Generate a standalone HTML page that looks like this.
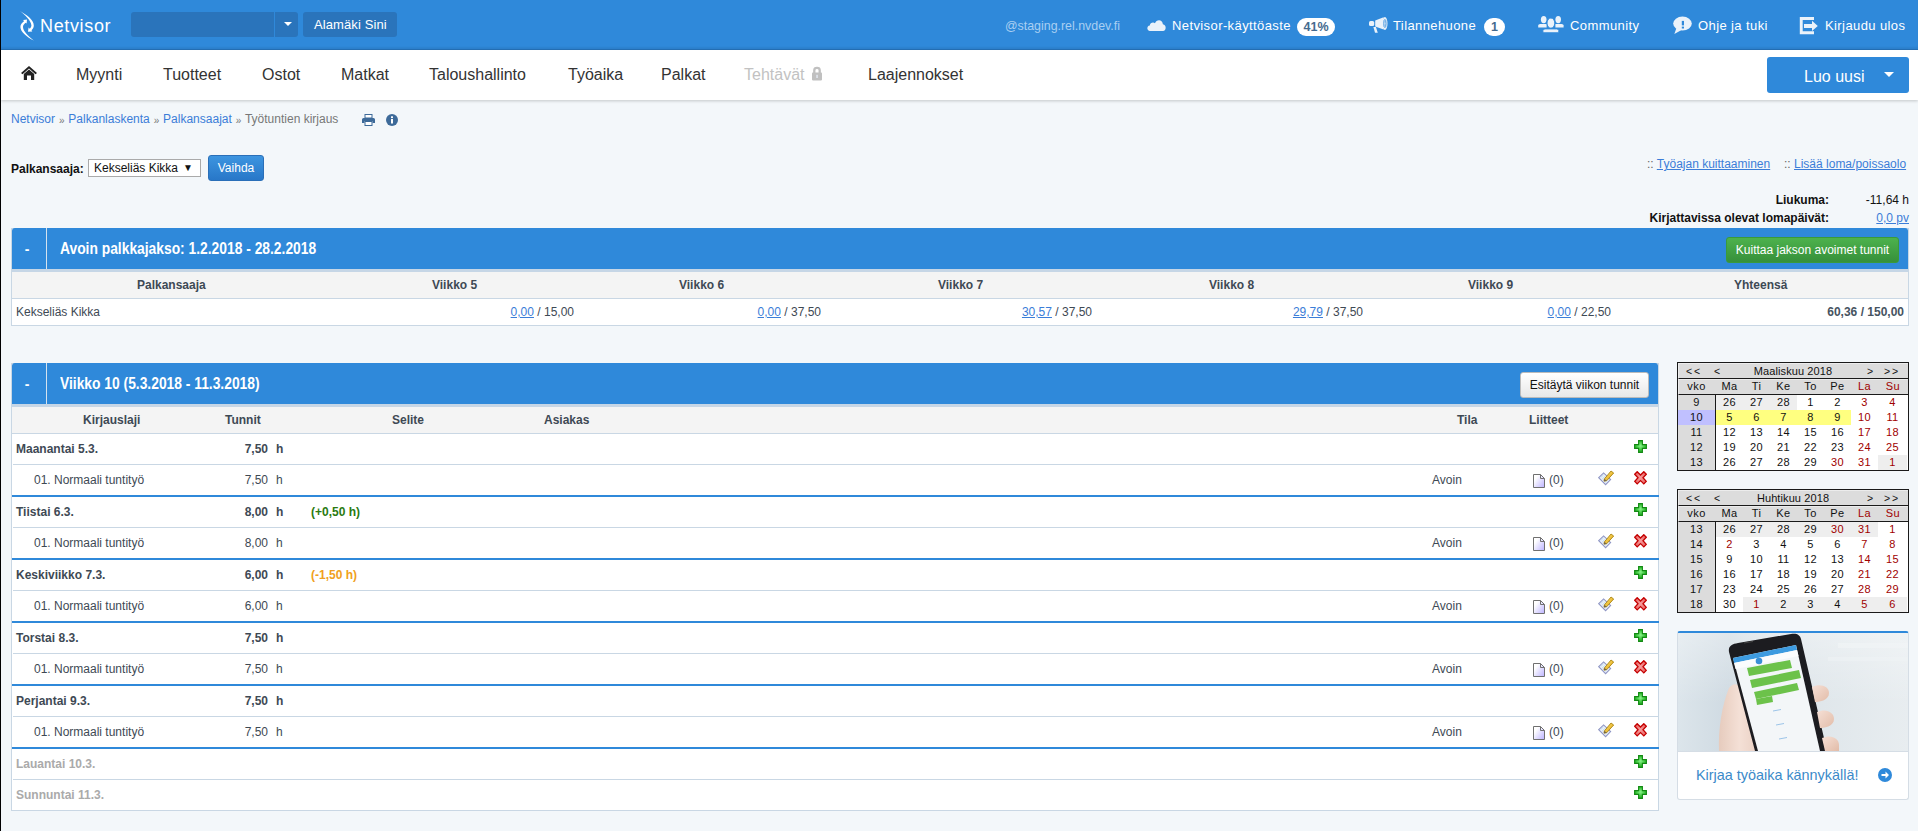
<!DOCTYPE html>
<html><head><meta charset="utf-8">
<style>
*{box-sizing:border-box;margin:0;padding:0}
html,body{width:1918px;height:831px;overflow:hidden}
body{font-family:"Liberation Sans",sans-serif;background:#f3f7fa;position:relative;color:#333}
.a{position:absolute;white-space:nowrap}
#lb{position:absolute;left:0;top:0;width:1px;height:831px;background:#000;z-index:50}
#top{position:absolute;left:0;top:0;width:1918px;height:50px;background:#2f89da;border-bottom:1px solid #2672b8;box-shadow:inset 0 -2px 2px rgba(0,0,0,.06)}
#top .t{position:absolute;color:#fff;font-size:13px;letter-spacing:0.4px;white-space:nowrap;top:18px;line-height:16px}
.badge{position:absolute;background:#fff;color:#456a8e;font-weight:bold;font-size:12.5px;text-align:center;border-radius:9px;height:18px;line-height:18px;top:18px}
#nav{position:absolute;left:1px;top:50px;width:1917px;height:50px;background:#fff;box-shadow:0 1px 3px rgba(0,0,0,.2)}
#nav .n{position:absolute;top:16px;font-size:16px;line-height:18px;color:#333;white-space:nowrap}
.lnk{color:#3b7dd8}
.ul{text-decoration:underline}
.panel{position:absolute;background:#fff;border:1px solid #c9d7e4}
.ph{position:absolute;left:0;top:-1px;right:0;height:41px;background:#2f89da;border-radius:3px 3px 0 0}
.ph .dash{position:absolute;left:0;top:0;width:35px;height:41px;border-right:1px solid #d5e3ef;color:#fff;font-weight:bold;font-size:14px;text-align:center;line-height:42px;padding-right:4px}
.ph .tt{position:absolute;left:48px;top:12px;color:#fff;font-weight:bold;font-size:16px;line-height:18px;white-space:nowrap;transform:scaleX(0.864);transform-origin:0 0}
.strip{position:absolute;left:0;right:0;top:40px;height:3px;background:#c6d6e6}
.th{position:absolute;left:0;right:0;top:43px;height:27px;background:#f4f4f4;border-bottom:1px solid #c9d7e4}
.th div,.row div{position:absolute;white-space:nowrap;font-size:12px;line-height:14px}
.th div{font-weight:bold;color:#3e4954;top:6px}
.row{position:absolute;left:0;right:0;background:#fff;border-bottom:1px solid #c9d7e4}
.row div{color:#3e4954}
.row.b{border-bottom:2px solid #2f89da}
.bold{font-weight:bold}
.rq{font-size:10px;display:inline-block;width:6.67px;text-align:center;position:relative;top:1px}
.cal{position:absolute;border:1px solid #222;background:#fff;font-size:11px;color:#111;letter-spacing:.3px}
.cal table{border-collapse:collapse;width:100%;table-layout:fixed}
.cal td{text-align:center;height:15px;line-height:15px;padding:0}
</style></head><body>
<div id="lb"></div>
<svg width="0" height="0" style="position:absolute">
<defs>
<radialGradient id="gp" cx="0.5" cy="0.45" r="0.6"><stop offset="0" stop-color="#8af58a"/><stop offset="0.6" stop-color="#3cc43c"/><stop offset="1" stop-color="#1c9a1c"/></radialGradient>
<radialGradient id="gx" cx="0.5" cy="0.5" r="0.6"><stop offset="0" stop-color="#f8a0a0"/><stop offset="1" stop-color="#e86060"/></radialGradient>
<linearGradient id="gdoc" x1="0.2" y1="0.3" x2="0.9" y2="0.9"><stop offset="0" stop-color="#ffffff"/><stop offset="1" stop-color="#c4bcff"/></linearGradient>
<linearGradient id="gpen" x1="0" y1="0" x2="1" y2="1"><stop offset="0" stop-color="#ffe680"/><stop offset="1" stop-color="#e0a000"/></linearGradient>
</defs></svg>

<div id="top">
  <svg class="a" style="left:14px;top:6px" width="30" height="38" viewBox="0 0 30 38">
    <path d="M6 5 C12 8.5 19.8 13.5 19.8 19.5 C19.8 21.5 18.8 23 17.5 24.2 L18.3 25.6 L14 25.8 L14.6 21.6 L15.7 22.7 C16.9 21.6 17.4 20.5 17.4 19.5 C17.2 14.5 11 9 6 5 Z" fill="#fff"/>
    <path d="M19.8 34.6 C13 31 6.4 26 6.4 21 C6.4 18.6 8 16.6 10 15.2 L9.2 13.9 L13 13.6 L12.6 17.6 L11.6 16.8 C10 18 9 19.5 9 21 C9 25 14 30 19.8 34.6 Z" fill="#fff"/>
  </svg>
  <div class="t" style="left:40px;top:14.5px;font-size:18px;line-height:22px;letter-spacing:0.65px">Netvisor</div>
  <div class="a" style="left:131px;top:12px;width:143px;height:25px;background:#2a74bb;border-radius:3px 0 0 3px"></div>
  <div class="a" style="left:275px;top:12px;width:23px;height:25px;background:#2a74bb;border-radius:0 3px 3px 0"></div>
  <div class="a" style="left:283.5px;top:22px;width:0;height:0;border-left:4px solid transparent;border-right:4px solid transparent;border-top:4.5px solid #fff"></div>
  <div class="a" style="left:303px;top:12px;width:94px;height:25px;background:#2a74bb;border-radius:3px"></div>
  <div class="t" style="left:314px;top:17px;font-size:13px;letter-spacing:0.1px">Alamäki Sini</div>
  <div class="t" style="left:1005px;color:#a9cff2;font-size:12.4px;letter-spacing:0">@staging.rel.nvdev.fi</div>
  <svg class="a" style="left:1146px;top:19px" width="21" height="13" viewBox="0 0 21 13"><path d="M4 12 C0.6 12 0.4 7 3.8 6.6 C4 3.8 7 2.8 9 4.2 C10.2 0.4 16.4 0 16.9 5.2 C20.6 5.5 20.6 12 17 12 Z" fill="#eaf2fa"/></svg>
  <div class="t" style="left:1172px">Netvisor-käyttöaste</div>
  <div class="badge" style="left:1297px;width:38px">41%</div>
  <svg class="a" style="left:1366px;top:14px" width="24" height="22" viewBox="0 0 24 22"><rect x="3" y="7" width="5.2" height="5" rx="1.6" fill="#eaf2fa"/><path d="M9.2 6.5 L17.6 3.2 L17.6 15.6 L9.2 12.6 Z" fill="#eaf2fa"/><ellipse cx="18.9" cy="9.5" rx="2.6" ry="6.5" fill="#eaf2fa"/><ellipse cx="18.9" cy="9.5" rx="1.1" ry="4" fill="none" stroke="#2f89da" stroke-width="0.9"/><path d="M7.4 13 L9.9 13 L11.8 18.7 L9 18.7 Z" fill="#eaf2fa"/></svg>
  <div class="t" style="left:1393px">Tilannehuone</div>
  <div class="badge" style="left:1484px;width:21px">1</div>
  <svg class="a" style="left:1536px;top:14px" width="30" height="20" viewBox="0 0 30 20"><ellipse cx="7.7" cy="5.6" rx="2.8" ry="3.7" fill="#eaf2fa"/><path d="M2.2 13.6 V11.6 Q2.2 10 4.2 10 H10.6 V13.6 Z" fill="#eaf2fa"/><ellipse cx="22.2" cy="5.6" rx="2.8" ry="3.7" fill="#eaf2fa"/><path d="M19.4 10 H25.6 Q27.6 10 27.6 11.6 V13.6 H19.4 Z" fill="#eaf2fa"/><ellipse cx="14.9" cy="9.1" rx="3.9" ry="5.1" fill="#eaf2fa" stroke="#2f89da" stroke-width="1"/><path d="M6.9 18.8 V16.6 Q6.9 14.9 9 14.9 H20.8 Q22.8 14.9 22.8 16.6 V18.8 Z" fill="#eaf2fa" stroke="#2f89da" stroke-width="1"/></svg>
  <div class="t" style="left:1570px">Community</div>
  <svg class="a" style="left:1672px;top:15px" width="21" height="21" viewBox="0 0 21 21"><ellipse cx="10.5" cy="8.6" rx="9.3" ry="7" fill="#eaf2fa"/><path d="M4.5 13 L2.3 19 L10.5 14.5 Z" fill="#eaf2fa"/><rect x="9.8" y="5.9" width="2.2" height="4.5" fill="#2f89da"/><rect x="9.8" y="11.6" width="2.2" height="1.9" fill="#2f89da"/></svg>
  <div class="t" style="left:1698px">Ohje ja tuki</div>
  <svg class="a" style="left:1798px;top:15px" width="22" height="21" viewBox="0 0 22 21"><path d="M1.8 2 H16 V4.9 H4.7 V16.3 H16 V19.2 H1.8 Z" fill="#eaf2fa"/><path d="M6 9 H14 V5.7 L19.8 11 L14 16 V13 H6 Z" fill="#eaf2fa"/></svg>
  <div class="t" style="left:1825px">Kirjaudu ulos</div>
</div>
<div id="nav">
  <svg class="a" style="left:20px;top:16px" width="16" height="14" viewBox="0 0 16 14"><path d="M8 0 L16 7 L14.5 8.3 L8 2.6 L1.5 8.3 L0 7 Z" fill="#222"/><path d="M2.8 8 L8 3.6 L13.2 8 L13.2 14 L10 14 L10 9.5 L6 9.5 L6 14 L2.8 14 Z" fill="#222"/></svg>
  <div class="n" style="left:75px">Myynti</div>
  <div class="n" style="left:162px">Tuotteet</div>
  <div class="n" style="left:261px">Ostot</div>
  <div class="n" style="left:340px">Matkat</div>
  <div class="n" style="left:428px">Taloushallinto</div>
  <div class="n" style="left:567px">Työaika</div>
  <div class="n" style="left:660px">Palkat</div>
  <div class="n" style="left:743px;color:#c2c2c2">Tehtävät</div>
  <svg class="a" style="left:810px;top:16px" width="12" height="15" viewBox="0 0 12 15"><path d="M3.3 7 V4.2 C3.3 1.2 8.7 1.2 8.7 4.2 V7" stroke="#c0c0c0" stroke-width="2.3" fill="none"/><rect x="1" y="6.6" width="10" height="7.8" rx="0.8" fill="#c0c0c0"/><rect x="5.4" y="8.8" width="1.3" height="3.2" fill="#e8eef8"/></svg>
  <div class="n" style="left:867px">Laajennokset</div>
  <div class="a" style="left:1766px;top:7px;width:142px;height:36px;background:#2f89da;border-radius:3px"></div>
  <div class="n" style="left:1803px;top:18px;color:#fff">Luo uusi</div>
  <div class="a" style="left:1883px;top:22px;width:0;height:0;border-left:5px solid transparent;border-right:5px solid transparent;border-top:5px solid #fff"></div>
</div>

<!-- breadcrumb -->
<div class="a" style="left:11px;top:112px;font-size:12px;line-height:14px;color:#777"><span class="lnk">Netvisor</span> <span class="rq">»</span> <span class="lnk">Palkanlaskenta</span> <span class="rq">»</span> <span class="lnk">Palkansaajat</span> <span class="rq">»</span> Työtuntien kirjaus</div>
<svg class="a" style="left:362px;top:114px" width="13" height="12" viewBox="0 0 13 12"><rect x="3" y="0.5" width="7" height="3.5" fill="#fff" stroke="#3d6a99" stroke-width="1"/><path d="M1.5 4 H11.5 Q13 4 13 5.5 V9 H10.5 V7 H2.5 V9 H0 V5.5 Q0 4 1.5 4 Z" fill="#3d6a99"/><rect x="3" y="7.5" width="7" height="4" fill="#fff" stroke="#3d6a99" stroke-width="1"/></svg>
<svg class="a" style="left:386px;top:114px" width="12" height="12" viewBox="0 0 12 12"><circle cx="6" cy="6" r="6" fill="#3d6a99"/><rect x="5" y="5" width="2" height="4.5" fill="#fff"/><rect x="5" y="2.3" width="2" height="1.8" fill="#fff"/></svg>

<div class="a bold" style="left:11px;top:162px;font-size:12px;line-height:14px;color:#111">Palkansaaja:</div>
<div class="a" style="left:88px;top:159px;width:113px;height:18px;background:#fff;border:1px solid #aaa;font-size:12px;line-height:16px;padding-left:5px;color:#111">Kekseliäs Kikka<span style="position:absolute;left:94px;font-size:10px">▼</span></div>
<div class="a" style="left:208px;top:155px;width:56px;height:26px;background:linear-gradient(#3d95e0,#2877c8);border:1px solid #2a6fb8;border-radius:3px;color:#fff;font-size:12px;line-height:24px;text-align:center">Vaihda</div>

<div class="a" style="left:1647px;top:157px;font-size:12px;line-height:14px;color:#666">:: <span class="lnk ul">Työajan kuittaaminen</span></div>
<div class="a" style="left:1784px;top:157px;font-size:12px;line-height:14px;color:#666">:: <span class="lnk ul">Lisää loma/poissaolo</span></div>
<div class="a bold" style="right:89px;top:193px;font-size:12px;line-height:14px;color:#111">Liukuma:</div>
<div class="a" style="right:9px;top:193px;font-size:12px;line-height:14px;color:#111">-11,64 h</div>
<div class="a bold" style="right:89px;top:211px;font-size:12px;line-height:14px;color:#111">Kirjattavissa olevat lomapäivät:</div>
<div class="a lnk ul" style="right:9px;top:211px;font-size:12px;line-height:14px">0,0 pv</div>

<!-- panel 1 -->
<div class="panel" style="left:11px;top:228px;width:1898px;height:98px">
  <div class="ph"><div class="dash">-</div><div class="tt">Avoin palkkajakso: 1.2.2018 - 28.2.2018</div>
    <div class="a" style="right:9px;top:9px;width:173px;height:26px;background:linear-gradient(#4db24d,#36903a);border:1px solid #3a9a3a;border-radius:3px;color:#fff;font-size:12px;line-height:24px;text-align:center">Kuittaa jakson avoimet tunnit</div>
  </div>
  <div class="strip"></div>
  <div class="th">
    <div style="left:125px">Palkansaaja</div>
    <div style="left:420px">Viikko 5</div>
    <div style="left:667px">Viikko 6</div>
    <div style="left:926px">Viikko 7</div>
    <div style="left:1197px">Viikko 8</div>
    <div style="left:1456px">Viikko 9</div>
    <div style="left:1722px">Yhteensä</div>
  </div>
  <div class="row" style="top:70px;height:26px;border-bottom:none">
    <div style="left:4px;top:6px">Kekseliäs Kikka</div>
    <div style="right:1334px;top:6px"><span class="lnk ul">0,00</span> / 15,00</div>
    <div style="right:1087px;top:6px"><span class="lnk ul">0,00</span> / 37,50</div>
    <div style="right:816px;top:6px"><span class="lnk ul">30,57</span> / 37,50</div>
    <div style="right:545px;top:6px"><span class="lnk ul">29,79</span> / 37,50</div>
    <div style="right:297px;top:6px"><span class="lnk ul">0,00</span> / 22,50</div>
    <div style="right:4px;top:6px;color:#46535f" class="bold">60,36 / 150,00</div>
  </div>
</div>

<!-- panel 2 -->
<div class="panel" id="p2" style="left:11px;top:363px;width:1648px;height:448px">
  <div class="ph"><div class="dash">-</div><div class="tt">Viikko 10 (5.3.2018 - 11.3.2018)</div>
    <div class="a" style="right:9px;top:9px;width:129px;height:26px;background:linear-gradient(#fff,#e8e8e8);border:1px solid #bbb;border-radius:3px;color:#111;font-size:12px;line-height:25px;text-align:center">Esitäytä viikon tunnit</div>
  </div>
  <div class="strip"></div>
  <div class="th">
    <div style="left:71px">Kirjauslaji</div>
    <div style="left:213px">Tunnit</div>
    <div style="left:380px">Selite</div>
    <div style="left:532px">Asiakas</div>
    <div style="left:1445px">Tila</div>
    <div style="left:1517px">Liitteet</div>
  </div>
</div>
<div class="a bold" style="left:16px;top:442px;font-size:12px;line-height:14px;color:#3e4954">Maanantai 5.3.</div>
<div class="a bold" style="left:228px;width:40px;text-align:right;top:442px;font-size:12px;line-height:14px;color:#3e4954">7,50</div>
<div class="a bold" style="left:276px;top:442px;font-size:12px;line-height:14px;color:#3e4954">h</div>
<svg class="a" style="left:1634px;top:440px" width="13" height="13" viewBox="0 0 13 13"><path d="M4.6 0.6 H8.4 V4.6 H12.4 V8.4 H8.4 V12.4 H4.6 V8.4 H0.6 V4.6 H4.6 Z" fill="url(#gp)" stroke="#138a13" stroke-width="1.1" stroke-linejoin="miter"/></svg>
<div class="a" style="left:13px;top:464px;width:1645px;height:1px;background:#c9d7e4"></div>
<div class="a" style="left:34px;top:473px;font-size:12px;line-height:14px;color:#3e4954">01. Normaali tuntityö</div>
<div class="a" style="left:228px;width:40px;text-align:right;top:473px;font-size:12px;line-height:14px;color:#3e4954">7,50</div>
<div class="a" style="left:276px;top:473px;font-size:12px;line-height:14px;color:#3e4954">h</div>
<div class="a" style="left:1432px;top:473px;font-size:12px;line-height:14px;color:#3e4954">Avoin</div>
<svg class="a" style="left:1533px;top:474px" width="12" height="14" viewBox="0 0 12 14"><path d="M0.5 0.5 H7.5 L11.5 4.5 V13.5 H0.5 Z" fill="url(#gdoc)" stroke="#707070" stroke-width="1" stroke-linejoin="miter"/><path d="M7.5 0.5 V4.5 H11.5" fill="none" stroke="#707070" stroke-width="1"/></svg>
<div class="a" style="left:1549px;top:473px;font-size:12px;line-height:14px;color:#3e4954">(0)</div>
<svg class="a" style="left:1598px;top:469px" width="16" height="17" viewBox="0 0 16 17"><path d="M0.7 8.6 L5.6 3.9 L12.6 10.6 L7.6 15.6 Z" fill="#eef2fc" stroke="#8f96c4" stroke-width="1.1"/><path d="M2.6 8.7 L5.7 5.8 M4.1 10.2 L7.2 7.3 M5.6 11.7 L8.7 8.8 M7.1 13.2 L10.2 10.3" stroke="#a8d0e0" stroke-width="0.7"/><path d="M6.3 10 L13 2 L15.7 4 L8.8 11.6 L6 12.2 Z" fill="url(#gpen)" stroke="#a07800" stroke-width="0.8"/><path d="M6 12.2 L6.3 10 L8.8 11.6 Z" fill="#6a6050"/></svg>
<svg class="a" style="left:1634px;top:471px" width="13" height="14" viewBox="0 0 13 14"><path d="M0.7 3.2 L3.2 0.7 L6.5 4 L9.8 0.7 L12.3 3.2 L9 6.8 L12.3 10.4 L9.8 12.9 L6.5 9.6 L3.2 12.9 L0.7 10.4 L4 6.8 Z" fill="url(#gx)" stroke="#c40000" stroke-width="1.3" stroke-linejoin="miter"/></svg>
<div class="a" style="left:12px;top:495px;width:1647px;height:2px;background:#2f89da"></div>
<div class="a bold" style="left:16px;top:505px;font-size:12px;line-height:14px;color:#3e4954">Tiistai 6.3.</div>
<div class="a bold" style="left:228px;width:40px;text-align:right;top:505px;font-size:12px;line-height:14px;color:#3e4954">8,00</div>
<div class="a bold" style="left:276px;top:505px;font-size:12px;line-height:14px;color:#3e4954">h</div>
<div class="a bold" style="left:311px;top:505px;font-size:12px;line-height:14px;color:#2a7a10">(+0,50 h)</div>
<svg class="a" style="left:1634px;top:503px" width="13" height="13" viewBox="0 0 13 13"><path d="M4.6 0.6 H8.4 V4.6 H12.4 V8.4 H8.4 V12.4 H4.6 V8.4 H0.6 V4.6 H4.6 Z" fill="url(#gp)" stroke="#138a13" stroke-width="1.1" stroke-linejoin="miter"/></svg>
<div class="a" style="left:13px;top:527px;width:1645px;height:1px;background:#c9d7e4"></div>
<div class="a" style="left:34px;top:536px;font-size:12px;line-height:14px;color:#3e4954">01. Normaali tuntityö</div>
<div class="a" style="left:228px;width:40px;text-align:right;top:536px;font-size:12px;line-height:14px;color:#3e4954">8,00</div>
<div class="a" style="left:276px;top:536px;font-size:12px;line-height:14px;color:#3e4954">h</div>
<div class="a" style="left:1432px;top:536px;font-size:12px;line-height:14px;color:#3e4954">Avoin</div>
<svg class="a" style="left:1533px;top:537px" width="12" height="14" viewBox="0 0 12 14"><path d="M0.5 0.5 H7.5 L11.5 4.5 V13.5 H0.5 Z" fill="url(#gdoc)" stroke="#707070" stroke-width="1" stroke-linejoin="miter"/><path d="M7.5 0.5 V4.5 H11.5" fill="none" stroke="#707070" stroke-width="1"/></svg>
<div class="a" style="left:1549px;top:536px;font-size:12px;line-height:14px;color:#3e4954">(0)</div>
<svg class="a" style="left:1598px;top:532px" width="16" height="17" viewBox="0 0 16 17"><path d="M0.7 8.6 L5.6 3.9 L12.6 10.6 L7.6 15.6 Z" fill="#eef2fc" stroke="#8f96c4" stroke-width="1.1"/><path d="M2.6 8.7 L5.7 5.8 M4.1 10.2 L7.2 7.3 M5.6 11.7 L8.7 8.8 M7.1 13.2 L10.2 10.3" stroke="#a8d0e0" stroke-width="0.7"/><path d="M6.3 10 L13 2 L15.7 4 L8.8 11.6 L6 12.2 Z" fill="url(#gpen)" stroke="#a07800" stroke-width="0.8"/><path d="M6 12.2 L6.3 10 L8.8 11.6 Z" fill="#6a6050"/></svg>
<svg class="a" style="left:1634px;top:534px" width="13" height="14" viewBox="0 0 13 14"><path d="M0.7 3.2 L3.2 0.7 L6.5 4 L9.8 0.7 L12.3 3.2 L9 6.8 L12.3 10.4 L9.8 12.9 L6.5 9.6 L3.2 12.9 L0.7 10.4 L4 6.8 Z" fill="url(#gx)" stroke="#c40000" stroke-width="1.3" stroke-linejoin="miter"/></svg>
<div class="a" style="left:12px;top:558px;width:1647px;height:2px;background:#2f89da"></div>
<div class="a bold" style="left:16px;top:568px;font-size:12px;line-height:14px;color:#3e4954">Keskiviikko 7.3.</div>
<div class="a bold" style="left:228px;width:40px;text-align:right;top:568px;font-size:12px;line-height:14px;color:#3e4954">6,00</div>
<div class="a bold" style="left:276px;top:568px;font-size:12px;line-height:14px;color:#3e4954">h</div>
<div class="a bold" style="left:311px;top:568px;font-size:12px;line-height:14px;color:#f0a020">(-1,50 h)</div>
<svg class="a" style="left:1634px;top:566px" width="13" height="13" viewBox="0 0 13 13"><path d="M4.6 0.6 H8.4 V4.6 H12.4 V8.4 H8.4 V12.4 H4.6 V8.4 H0.6 V4.6 H4.6 Z" fill="url(#gp)" stroke="#138a13" stroke-width="1.1" stroke-linejoin="miter"/></svg>
<div class="a" style="left:13px;top:590px;width:1645px;height:1px;background:#c9d7e4"></div>
<div class="a" style="left:34px;top:599px;font-size:12px;line-height:14px;color:#3e4954">01. Normaali tuntityö</div>
<div class="a" style="left:228px;width:40px;text-align:right;top:599px;font-size:12px;line-height:14px;color:#3e4954">6,00</div>
<div class="a" style="left:276px;top:599px;font-size:12px;line-height:14px;color:#3e4954">h</div>
<div class="a" style="left:1432px;top:599px;font-size:12px;line-height:14px;color:#3e4954">Avoin</div>
<svg class="a" style="left:1533px;top:600px" width="12" height="14" viewBox="0 0 12 14"><path d="M0.5 0.5 H7.5 L11.5 4.5 V13.5 H0.5 Z" fill="url(#gdoc)" stroke="#707070" stroke-width="1" stroke-linejoin="miter"/><path d="M7.5 0.5 V4.5 H11.5" fill="none" stroke="#707070" stroke-width="1"/></svg>
<div class="a" style="left:1549px;top:599px;font-size:12px;line-height:14px;color:#3e4954">(0)</div>
<svg class="a" style="left:1598px;top:595px" width="16" height="17" viewBox="0 0 16 17"><path d="M0.7 8.6 L5.6 3.9 L12.6 10.6 L7.6 15.6 Z" fill="#eef2fc" stroke="#8f96c4" stroke-width="1.1"/><path d="M2.6 8.7 L5.7 5.8 M4.1 10.2 L7.2 7.3 M5.6 11.7 L8.7 8.8 M7.1 13.2 L10.2 10.3" stroke="#a8d0e0" stroke-width="0.7"/><path d="M6.3 10 L13 2 L15.7 4 L8.8 11.6 L6 12.2 Z" fill="url(#gpen)" stroke="#a07800" stroke-width="0.8"/><path d="M6 12.2 L6.3 10 L8.8 11.6 Z" fill="#6a6050"/></svg>
<svg class="a" style="left:1634px;top:597px" width="13" height="14" viewBox="0 0 13 14"><path d="M0.7 3.2 L3.2 0.7 L6.5 4 L9.8 0.7 L12.3 3.2 L9 6.8 L12.3 10.4 L9.8 12.9 L6.5 9.6 L3.2 12.9 L0.7 10.4 L4 6.8 Z" fill="url(#gx)" stroke="#c40000" stroke-width="1.3" stroke-linejoin="miter"/></svg>
<div class="a" style="left:12px;top:621px;width:1647px;height:2px;background:#2f89da"></div>
<div class="a bold" style="left:16px;top:631px;font-size:12px;line-height:14px;color:#3e4954">Torstai 8.3.</div>
<div class="a bold" style="left:228px;width:40px;text-align:right;top:631px;font-size:12px;line-height:14px;color:#3e4954">7,50</div>
<div class="a bold" style="left:276px;top:631px;font-size:12px;line-height:14px;color:#3e4954">h</div>
<svg class="a" style="left:1634px;top:629px" width="13" height="13" viewBox="0 0 13 13"><path d="M4.6 0.6 H8.4 V4.6 H12.4 V8.4 H8.4 V12.4 H4.6 V8.4 H0.6 V4.6 H4.6 Z" fill="url(#gp)" stroke="#138a13" stroke-width="1.1" stroke-linejoin="miter"/></svg>
<div class="a" style="left:13px;top:653px;width:1645px;height:1px;background:#c9d7e4"></div>
<div class="a" style="left:34px;top:662px;font-size:12px;line-height:14px;color:#3e4954">01. Normaali tuntityö</div>
<div class="a" style="left:228px;width:40px;text-align:right;top:662px;font-size:12px;line-height:14px;color:#3e4954">7,50</div>
<div class="a" style="left:276px;top:662px;font-size:12px;line-height:14px;color:#3e4954">h</div>
<div class="a" style="left:1432px;top:662px;font-size:12px;line-height:14px;color:#3e4954">Avoin</div>
<svg class="a" style="left:1533px;top:663px" width="12" height="14" viewBox="0 0 12 14"><path d="M0.5 0.5 H7.5 L11.5 4.5 V13.5 H0.5 Z" fill="url(#gdoc)" stroke="#707070" stroke-width="1" stroke-linejoin="miter"/><path d="M7.5 0.5 V4.5 H11.5" fill="none" stroke="#707070" stroke-width="1"/></svg>
<div class="a" style="left:1549px;top:662px;font-size:12px;line-height:14px;color:#3e4954">(0)</div>
<svg class="a" style="left:1598px;top:658px" width="16" height="17" viewBox="0 0 16 17"><path d="M0.7 8.6 L5.6 3.9 L12.6 10.6 L7.6 15.6 Z" fill="#eef2fc" stroke="#8f96c4" stroke-width="1.1"/><path d="M2.6 8.7 L5.7 5.8 M4.1 10.2 L7.2 7.3 M5.6 11.7 L8.7 8.8 M7.1 13.2 L10.2 10.3" stroke="#a8d0e0" stroke-width="0.7"/><path d="M6.3 10 L13 2 L15.7 4 L8.8 11.6 L6 12.2 Z" fill="url(#gpen)" stroke="#a07800" stroke-width="0.8"/><path d="M6 12.2 L6.3 10 L8.8 11.6 Z" fill="#6a6050"/></svg>
<svg class="a" style="left:1634px;top:660px" width="13" height="14" viewBox="0 0 13 14"><path d="M0.7 3.2 L3.2 0.7 L6.5 4 L9.8 0.7 L12.3 3.2 L9 6.8 L12.3 10.4 L9.8 12.9 L6.5 9.6 L3.2 12.9 L0.7 10.4 L4 6.8 Z" fill="url(#gx)" stroke="#c40000" stroke-width="1.3" stroke-linejoin="miter"/></svg>
<div class="a" style="left:12px;top:684px;width:1647px;height:2px;background:#2f89da"></div>
<div class="a bold" style="left:16px;top:694px;font-size:12px;line-height:14px;color:#3e4954">Perjantai 9.3.</div>
<div class="a bold" style="left:228px;width:40px;text-align:right;top:694px;font-size:12px;line-height:14px;color:#3e4954">7,50</div>
<div class="a bold" style="left:276px;top:694px;font-size:12px;line-height:14px;color:#3e4954">h</div>
<svg class="a" style="left:1634px;top:692px" width="13" height="13" viewBox="0 0 13 13"><path d="M4.6 0.6 H8.4 V4.6 H12.4 V8.4 H8.4 V12.4 H4.6 V8.4 H0.6 V4.6 H4.6 Z" fill="url(#gp)" stroke="#138a13" stroke-width="1.1" stroke-linejoin="miter"/></svg>
<div class="a" style="left:13px;top:716px;width:1645px;height:1px;background:#c9d7e4"></div>
<div class="a" style="left:34px;top:725px;font-size:12px;line-height:14px;color:#3e4954">01. Normaali tuntityö</div>
<div class="a" style="left:228px;width:40px;text-align:right;top:725px;font-size:12px;line-height:14px;color:#3e4954">7,50</div>
<div class="a" style="left:276px;top:725px;font-size:12px;line-height:14px;color:#3e4954">h</div>
<div class="a" style="left:1432px;top:725px;font-size:12px;line-height:14px;color:#3e4954">Avoin</div>
<svg class="a" style="left:1533px;top:726px" width="12" height="14" viewBox="0 0 12 14"><path d="M0.5 0.5 H7.5 L11.5 4.5 V13.5 H0.5 Z" fill="url(#gdoc)" stroke="#707070" stroke-width="1" stroke-linejoin="miter"/><path d="M7.5 0.5 V4.5 H11.5" fill="none" stroke="#707070" stroke-width="1"/></svg>
<div class="a" style="left:1549px;top:725px;font-size:12px;line-height:14px;color:#3e4954">(0)</div>
<svg class="a" style="left:1598px;top:721px" width="16" height="17" viewBox="0 0 16 17"><path d="M0.7 8.6 L5.6 3.9 L12.6 10.6 L7.6 15.6 Z" fill="#eef2fc" stroke="#8f96c4" stroke-width="1.1"/><path d="M2.6 8.7 L5.7 5.8 M4.1 10.2 L7.2 7.3 M5.6 11.7 L8.7 8.8 M7.1 13.2 L10.2 10.3" stroke="#a8d0e0" stroke-width="0.7"/><path d="M6.3 10 L13 2 L15.7 4 L8.8 11.6 L6 12.2 Z" fill="url(#gpen)" stroke="#a07800" stroke-width="0.8"/><path d="M6 12.2 L6.3 10 L8.8 11.6 Z" fill="#6a6050"/></svg>
<svg class="a" style="left:1634px;top:723px" width="13" height="14" viewBox="0 0 13 14"><path d="M0.7 3.2 L3.2 0.7 L6.5 4 L9.8 0.7 L12.3 3.2 L9 6.8 L12.3 10.4 L9.8 12.9 L6.5 9.6 L3.2 12.9 L0.7 10.4 L4 6.8 Z" fill="url(#gx)" stroke="#c40000" stroke-width="1.3" stroke-linejoin="miter"/></svg>
<div class="a" style="left:12px;top:747px;width:1647px;height:2px;background:#2f89da"></div>
<div class="a bold" style="left:16px;top:757px;font-size:12px;line-height:14px;color:#aaa">Lauantai 10.3.</div>
<svg class="a" style="left:1634px;top:755px" width="13" height="13" viewBox="0 0 13 13"><path d="M4.6 0.6 H8.4 V4.6 H12.4 V8.4 H8.4 V12.4 H4.6 V8.4 H0.6 V4.6 H4.6 Z" fill="url(#gp)" stroke="#138a13" stroke-width="1.1" stroke-linejoin="miter"/></svg>
<div class="a" style="left:13px;top:779px;width:1645px;height:1px;background:#c9d7e4"></div>
<div class="a bold" style="left:16px;top:788px;font-size:12px;line-height:14px;color:#aaa">Sunnuntai 11.3.</div>
<svg class="a" style="left:1634px;top:786px" width="13" height="13" viewBox="0 0 13 13"><path d="M4.6 0.6 H8.4 V4.6 H12.4 V8.4 H8.4 V12.4 H4.6 V8.4 H0.6 V4.6 H4.6 Z" fill="url(#gp)" stroke="#138a13" stroke-width="1.1" stroke-linejoin="miter"/></svg>
<!-- calendars -->
<div class="a" style="left:1677px;top:362px;width:232px;height:109px;background:#fff;border:1px solid #1a1a1a;font-size:11px;color:#111;letter-spacing:0.4px">
<div class="a" style="left:0;top:0;width:230px;height:16px;background:#dcdcdc;border-bottom:1px solid #1a1a1a;border-top:1px solid #ececec;border-left:1px solid #ececec"></div>
<div class="a" style="left:8px;top:1px;line-height:14px;letter-spacing:1.8px;font-size:10.5px">&lt;&lt;</div>
<div class="a" style="left:36px;top:1px;line-height:14px;letter-spacing:1.8px;font-size:10.5px">&lt;</div>
<div class="a" style="left:189px;top:1px;line-height:14px;letter-spacing:1.8px;font-size:10.5px">&gt;</div>
<div class="a" style="left:206px;top:1px;line-height:14px;letter-spacing:1.8px;font-size:10.5px">&gt;&gt;</div>
<div class="a" style="left:0;width:230px;text-align:center;top:1px;line-height:14px;letter-spacing:0.1px">Maaliskuu 2018</div>
<div class="a" style="left:0;top:16px;width:230px;height:16px;background:#dcdcdc;border-bottom:1px solid #1a1a1a;border-top:1px solid #ececec;border-left:1px solid #ececec"></div>
<div class="a" style="left:0px;top:16px;width:37px;height:15px;line-height:15px;text-align:center;color:#111">vko</div>
<div class="a" style="left:38px;top:16px;width:27px;height:15px;line-height:15px;text-align:center;color:#111">Ma</div>
<div class="a" style="left:65px;top:16px;width:27px;height:15px;line-height:15px;text-align:center;color:#111">Ti</div>
<div class="a" style="left:92px;top:16px;width:27px;height:15px;line-height:15px;text-align:center;color:#111">Ke</div>
<div class="a" style="left:119px;top:16px;width:27px;height:15px;line-height:15px;text-align:center;color:#111">To</div>
<div class="a" style="left:146px;top:16px;width:27px;height:15px;line-height:15px;text-align:center;color:#111">Pe</div>
<div class="a" style="left:173px;top:16px;width:27px;height:15px;line-height:15px;text-align:center;color:#a00000">La</div>
<div class="a" style="left:200px;top:16px;width:30px;height:15px;line-height:15px;text-align:center;color:#a00000">Su</div>
<div class="a" style="left:0;top:32px;width:38px;height:75px;background:#dcdcdc;border-right:1px solid #1a1a1a"></div>
<div class="a" style="left:0px;top:32px;width:37px;height:15px;line-height:15px;text-align:center;color:#111">9</div>
<div class="a" style="left:38px;top:32px;width:27px;height:15px;line-height:15px;text-align:center;color:#111;background:#eeeeee">26</div>
<div class="a" style="left:65px;top:32px;width:27px;height:15px;line-height:15px;text-align:center;color:#111;background:#eeeeee">27</div>
<div class="a" style="left:92px;top:32px;width:27px;height:15px;line-height:15px;text-align:center;color:#111;background:#eeeeee">28</div>
<div class="a" style="left:119px;top:32px;width:27px;height:15px;line-height:15px;text-align:center;color:#111">1</div>
<div class="a" style="left:146px;top:32px;width:27px;height:15px;line-height:15px;text-align:center;color:#111">2</div>
<div class="a" style="left:173px;top:32px;width:27px;height:15px;line-height:15px;text-align:center;color:#a00000">3</div>
<div class="a" style="left:200px;top:32px;width:29px;height:15px;line-height:15px;text-align:center;color:#a00000">4</div>
<div class="a" style="left:0px;top:47px;width:37px;height:15px;line-height:15px;text-align:center;color:#111;background:#c0c0ff">10</div>
<div class="a" style="left:38px;top:47px;width:27px;height:15px;line-height:15px;text-align:center;color:#111;background:#ffff80">5</div>
<div class="a" style="left:65px;top:47px;width:27px;height:15px;line-height:15px;text-align:center;color:#111;background:#ffff80">6</div>
<div class="a" style="left:92px;top:47px;width:27px;height:15px;line-height:15px;text-align:center;color:#111;background:#ffff80">7</div>
<div class="a" style="left:119px;top:47px;width:27px;height:15px;line-height:15px;text-align:center;color:#111;background:#ffff80">8</div>
<div class="a" style="left:146px;top:47px;width:27px;height:15px;line-height:15px;text-align:center;color:#111;background:#ffff80">9</div>
<div class="a" style="left:173px;top:47px;width:27px;height:15px;line-height:15px;text-align:center;color:#a00000">10</div>
<div class="a" style="left:200px;top:47px;width:29px;height:15px;line-height:15px;text-align:center;color:#a00000">11</div>
<div class="a" style="left:0px;top:62px;width:37px;height:15px;line-height:15px;text-align:center;color:#111">11</div>
<div class="a" style="left:38px;top:62px;width:27px;height:15px;line-height:15px;text-align:center;color:#111">12</div>
<div class="a" style="left:65px;top:62px;width:27px;height:15px;line-height:15px;text-align:center;color:#111">13</div>
<div class="a" style="left:92px;top:62px;width:27px;height:15px;line-height:15px;text-align:center;color:#111">14</div>
<div class="a" style="left:119px;top:62px;width:27px;height:15px;line-height:15px;text-align:center;color:#111">15</div>
<div class="a" style="left:146px;top:62px;width:27px;height:15px;line-height:15px;text-align:center;color:#111">16</div>
<div class="a" style="left:173px;top:62px;width:27px;height:15px;line-height:15px;text-align:center;color:#a00000">17</div>
<div class="a" style="left:200px;top:62px;width:29px;height:15px;line-height:15px;text-align:center;color:#a00000">18</div>
<div class="a" style="left:0px;top:77px;width:37px;height:15px;line-height:15px;text-align:center;color:#111">12</div>
<div class="a" style="left:38px;top:77px;width:27px;height:15px;line-height:15px;text-align:center;color:#111">19</div>
<div class="a" style="left:65px;top:77px;width:27px;height:15px;line-height:15px;text-align:center;color:#111">20</div>
<div class="a" style="left:92px;top:77px;width:27px;height:15px;line-height:15px;text-align:center;color:#111">21</div>
<div class="a" style="left:119px;top:77px;width:27px;height:15px;line-height:15px;text-align:center;color:#111">22</div>
<div class="a" style="left:146px;top:77px;width:27px;height:15px;line-height:15px;text-align:center;color:#111">23</div>
<div class="a" style="left:173px;top:77px;width:27px;height:15px;line-height:15px;text-align:center;color:#a00000">24</div>
<div class="a" style="left:200px;top:77px;width:29px;height:15px;line-height:15px;text-align:center;color:#a00000">25</div>
<div class="a" style="left:0px;top:92px;width:37px;height:15px;line-height:15px;text-align:center;color:#111">13</div>
<div class="a" style="left:38px;top:92px;width:27px;height:15px;line-height:15px;text-align:center;color:#111">26</div>
<div class="a" style="left:65px;top:92px;width:27px;height:15px;line-height:15px;text-align:center;color:#111">27</div>
<div class="a" style="left:92px;top:92px;width:27px;height:15px;line-height:15px;text-align:center;color:#111">28</div>
<div class="a" style="left:119px;top:92px;width:27px;height:15px;line-height:15px;text-align:center;color:#111">29</div>
<div class="a" style="left:146px;top:92px;width:27px;height:15px;line-height:15px;text-align:center;color:#a00000">30</div>
<div class="a" style="left:173px;top:92px;width:27px;height:15px;line-height:15px;text-align:center;color:#a00000">31</div>
<div class="a" style="left:200px;top:92px;width:29px;height:15px;line-height:15px;text-align:center;color:#a00000;background:#eeeeee">1</div>
</div>
<div class="a" style="left:1677px;top:489px;width:232px;height:124px;background:#fff;border:1px solid #1a1a1a;font-size:11px;color:#111;letter-spacing:0.4px">
<div class="a" style="left:0;top:0;width:230px;height:16px;background:#dcdcdc;border-bottom:1px solid #1a1a1a;border-top:1px solid #ececec;border-left:1px solid #ececec"></div>
<div class="a" style="left:8px;top:1px;line-height:14px;letter-spacing:1.8px;font-size:10.5px">&lt;&lt;</div>
<div class="a" style="left:36px;top:1px;line-height:14px;letter-spacing:1.8px;font-size:10.5px">&lt;</div>
<div class="a" style="left:189px;top:1px;line-height:14px;letter-spacing:1.8px;font-size:10.5px">&gt;</div>
<div class="a" style="left:206px;top:1px;line-height:14px;letter-spacing:1.8px;font-size:10.5px">&gt;&gt;</div>
<div class="a" style="left:0;width:230px;text-align:center;top:1px;line-height:14px;letter-spacing:0.1px">Huhtikuu 2018</div>
<div class="a" style="left:0;top:16px;width:230px;height:16px;background:#dcdcdc;border-bottom:1px solid #1a1a1a;border-top:1px solid #ececec;border-left:1px solid #ececec"></div>
<div class="a" style="left:0px;top:16px;width:37px;height:15px;line-height:15px;text-align:center;color:#111">vko</div>
<div class="a" style="left:38px;top:16px;width:27px;height:15px;line-height:15px;text-align:center;color:#111">Ma</div>
<div class="a" style="left:65px;top:16px;width:27px;height:15px;line-height:15px;text-align:center;color:#111">Ti</div>
<div class="a" style="left:92px;top:16px;width:27px;height:15px;line-height:15px;text-align:center;color:#111">Ke</div>
<div class="a" style="left:119px;top:16px;width:27px;height:15px;line-height:15px;text-align:center;color:#111">To</div>
<div class="a" style="left:146px;top:16px;width:27px;height:15px;line-height:15px;text-align:center;color:#111">Pe</div>
<div class="a" style="left:173px;top:16px;width:27px;height:15px;line-height:15px;text-align:center;color:#a00000">La</div>
<div class="a" style="left:200px;top:16px;width:30px;height:15px;line-height:15px;text-align:center;color:#a00000">Su</div>
<div class="a" style="left:0;top:32px;width:38px;height:90px;background:#dcdcdc;border-right:1px solid #1a1a1a"></div>
<div class="a" style="left:0px;top:32px;width:37px;height:15px;line-height:15px;text-align:center;color:#111">13</div>
<div class="a" style="left:38px;top:32px;width:27px;height:15px;line-height:15px;text-align:center;color:#111;background:#eeeeee">26</div>
<div class="a" style="left:65px;top:32px;width:27px;height:15px;line-height:15px;text-align:center;color:#111;background:#eeeeee">27</div>
<div class="a" style="left:92px;top:32px;width:27px;height:15px;line-height:15px;text-align:center;color:#111;background:#eeeeee">28</div>
<div class="a" style="left:119px;top:32px;width:27px;height:15px;line-height:15px;text-align:center;color:#111;background:#eeeeee">29</div>
<div class="a" style="left:146px;top:32px;width:27px;height:15px;line-height:15px;text-align:center;color:#a00000;background:#eeeeee">30</div>
<div class="a" style="left:173px;top:32px;width:27px;height:15px;line-height:15px;text-align:center;color:#a00000;background:#eeeeee">31</div>
<div class="a" style="left:200px;top:32px;width:29px;height:15px;line-height:15px;text-align:center;color:#a00000">1</div>
<div class="a" style="left:0px;top:47px;width:37px;height:15px;line-height:15px;text-align:center;color:#111">14</div>
<div class="a" style="left:38px;top:47px;width:27px;height:15px;line-height:15px;text-align:center;color:#a00000">2</div>
<div class="a" style="left:65px;top:47px;width:27px;height:15px;line-height:15px;text-align:center;color:#111">3</div>
<div class="a" style="left:92px;top:47px;width:27px;height:15px;line-height:15px;text-align:center;color:#111">4</div>
<div class="a" style="left:119px;top:47px;width:27px;height:15px;line-height:15px;text-align:center;color:#111">5</div>
<div class="a" style="left:146px;top:47px;width:27px;height:15px;line-height:15px;text-align:center;color:#111">6</div>
<div class="a" style="left:173px;top:47px;width:27px;height:15px;line-height:15px;text-align:center;color:#a00000">7</div>
<div class="a" style="left:200px;top:47px;width:29px;height:15px;line-height:15px;text-align:center;color:#a00000">8</div>
<div class="a" style="left:0px;top:62px;width:37px;height:15px;line-height:15px;text-align:center;color:#111">15</div>
<div class="a" style="left:38px;top:62px;width:27px;height:15px;line-height:15px;text-align:center;color:#111">9</div>
<div class="a" style="left:65px;top:62px;width:27px;height:15px;line-height:15px;text-align:center;color:#111">10</div>
<div class="a" style="left:92px;top:62px;width:27px;height:15px;line-height:15px;text-align:center;color:#111">11</div>
<div class="a" style="left:119px;top:62px;width:27px;height:15px;line-height:15px;text-align:center;color:#111">12</div>
<div class="a" style="left:146px;top:62px;width:27px;height:15px;line-height:15px;text-align:center;color:#111">13</div>
<div class="a" style="left:173px;top:62px;width:27px;height:15px;line-height:15px;text-align:center;color:#a00000">14</div>
<div class="a" style="left:200px;top:62px;width:29px;height:15px;line-height:15px;text-align:center;color:#a00000">15</div>
<div class="a" style="left:0px;top:77px;width:37px;height:15px;line-height:15px;text-align:center;color:#111">16</div>
<div class="a" style="left:38px;top:77px;width:27px;height:15px;line-height:15px;text-align:center;color:#111">16</div>
<div class="a" style="left:65px;top:77px;width:27px;height:15px;line-height:15px;text-align:center;color:#111">17</div>
<div class="a" style="left:92px;top:77px;width:27px;height:15px;line-height:15px;text-align:center;color:#111">18</div>
<div class="a" style="left:119px;top:77px;width:27px;height:15px;line-height:15px;text-align:center;color:#111">19</div>
<div class="a" style="left:146px;top:77px;width:27px;height:15px;line-height:15px;text-align:center;color:#111">20</div>
<div class="a" style="left:173px;top:77px;width:27px;height:15px;line-height:15px;text-align:center;color:#a00000">21</div>
<div class="a" style="left:200px;top:77px;width:29px;height:15px;line-height:15px;text-align:center;color:#a00000">22</div>
<div class="a" style="left:0px;top:92px;width:37px;height:15px;line-height:15px;text-align:center;color:#111">17</div>
<div class="a" style="left:38px;top:92px;width:27px;height:15px;line-height:15px;text-align:center;color:#111">23</div>
<div class="a" style="left:65px;top:92px;width:27px;height:15px;line-height:15px;text-align:center;color:#111">24</div>
<div class="a" style="left:92px;top:92px;width:27px;height:15px;line-height:15px;text-align:center;color:#111">25</div>
<div class="a" style="left:119px;top:92px;width:27px;height:15px;line-height:15px;text-align:center;color:#111">26</div>
<div class="a" style="left:146px;top:92px;width:27px;height:15px;line-height:15px;text-align:center;color:#111">27</div>
<div class="a" style="left:173px;top:92px;width:27px;height:15px;line-height:15px;text-align:center;color:#a00000">28</div>
<div class="a" style="left:200px;top:92px;width:29px;height:15px;line-height:15px;text-align:center;color:#a00000">29</div>
<div class="a" style="left:0px;top:107px;width:37px;height:15px;line-height:15px;text-align:center;color:#111">18</div>
<div class="a" style="left:38px;top:107px;width:27px;height:15px;line-height:15px;text-align:center;color:#111">30</div>
<div class="a" style="left:65px;top:107px;width:27px;height:15px;line-height:15px;text-align:center;color:#a00000;background:#eeeeee">1</div>
<div class="a" style="left:92px;top:107px;width:27px;height:15px;line-height:15px;text-align:center;color:#111;background:#eeeeee">2</div>
<div class="a" style="left:119px;top:107px;width:27px;height:15px;line-height:15px;text-align:center;color:#111;background:#eeeeee">3</div>
<div class="a" style="left:146px;top:107px;width:27px;height:15px;line-height:15px;text-align:center;color:#111;background:#eeeeee">4</div>
<div class="a" style="left:173px;top:107px;width:27px;height:15px;line-height:15px;text-align:center;color:#a00000;background:#eeeeee">5</div>
<div class="a" style="left:200px;top:107px;width:29px;height:15px;line-height:15px;text-align:center;color:#a00000;background:#eeeeee">6</div>
</div>

<!-- ad -->
<div class="a" style="left:1677px;top:631px;width:232px;height:169px;background:#fff;border:1px solid #d5dde5;border-top:2px solid #2f89da;border-radius:3px;overflow:hidden">
  <svg class="a" style="left:0;top:0" width="230" height="118" viewBox="0 0 230 118">
    <defs>
      <linearGradient id="bg" x1="0" x2="1" y1="0" y2="0">
        <stop offset="0" stop-color="#dce5eb"/><stop offset="0.12" stop-color="#d5dfe6"/><stop offset="0.22" stop-color="#cfdae2"/><stop offset="0.4" stop-color="#dbe3e8"/><stop offset="1" stop-color="#e8edf0"/>
      </linearGradient>
      <linearGradient id="bgv" x1="0" x2="0" y1="0" y2="1">
        <stop offset="0" stop-color="#ffffff" stop-opacity="0.35"/><stop offset="0.6" stop-color="#ffffff" stop-opacity="0"/>
      </linearGradient>
      <linearGradient id="skin" x1="0" x2="1" y1="0" y2="0">
        <stop offset="0" stop-color="#e6cbbd"/><stop offset="0.5" stop-color="#f4e0d6"/><stop offset="1" stop-color="#e9cfc2"/>
      </linearGradient>
      <linearGradient id="fing" x1="0" x2="1" y1="0" y2="1">
        <stop offset="0" stop-color="#f6e0d6"/><stop offset="1" stop-color="#e2bca8"/>
      </linearGradient>
    </defs>
    <rect width="230" height="118" fill="url(#bg)"/><rect width="230" height="118" fill="url(#bgv)"/>
    <rect x="160" y="10" width="70" height="5" fill="#f2f5f7" opacity="0.6"/>
    <rect x="150" y="24" width="80" height="4" fill="#eff3f5" opacity="0.5"/>
    <!-- palm/thumb -->
    <path d="M41 118 C40 96 44 72 51 55 C55 49 62 50 66 58 L82 118 Z" fill="url(#skin)"/>
    <!-- phone body -->
    <path d="M51 19 C50 13 54 11 60 10 L113 1 C119 0 122 2 123 6 L149 118 L77 118 Z" fill="#1c1c20"/>
    <path d="M66 10 L75 8.5" stroke="#444" stroke-width="1"/>
    <!-- screen -->
    <path d="M55 25 L118 12 L142 118 L80 118 Z" fill="#f3f6f8"/>
    <path d="M55 25 L118 12 L119 17 L56 30 Z" fill="#3d9be0"/>
    <path d="M56 30 L119 17 L120.5 23 L57.5 36 Z" fill="#fbfcfd"/>
    <circle cx="81" cy="28" r="3.3" fill="#3a8fd6"/>
    <path d="M69 35 L112 27 L114 35 L71 43 Z" fill="#6cc24a"/>
    <path d="M72 47 L121 37 L123 45 L74 55 Z" fill="#6cc24a"/>
    <path d="M76 59 L119 50 L121 57 L78 66 Z" fill="#6cc24a"/>
    <path d="M78 66 L94 63 L95 69 L79 72 Z" fill="#6cc24a"/>
    
    <path d="M95 78 L103 76.5 M98 92 L106 90.5 M101 106 L109 104.5" stroke="#9cc4e8" stroke-width="1"/>
    <!-- fingers right -->
    <path d="M134 54 C142 50 151 53 151 60 C151 67 142 69 137 69 Z" fill="url(#fing)"/>
    <path d="M139 79 C148 75 156 79 156 86 C156 93 147 95 142 95 Z" fill="url(#fing)"/>
    <path d="M144 105 C153 101 161 105 161 112 L161 118 L147 118 Z" fill="url(#fing)"/>
  </svg>
  <div class="a" style="left:0;top:118px;width:230px;height:1px;background:#d5dde5"></div>
  <div class="a" style="left:18px;top:134px;font-size:14.4px;line-height:16px;color:#3b8ac9">Kirjaa työaika kännykällä!</div>
  <svg class="a" style="left:200px;top:135px" width="14" height="14" viewBox="0 0 14 14"><circle cx="7" cy="7" r="7" fill="#2f89da"/><path d="M3.5 6 H7.5 V3.5 L11 7 L7.5 10.5 V8 H3.5 Z" fill="#fff"/></svg>
</div>
</body></html>
